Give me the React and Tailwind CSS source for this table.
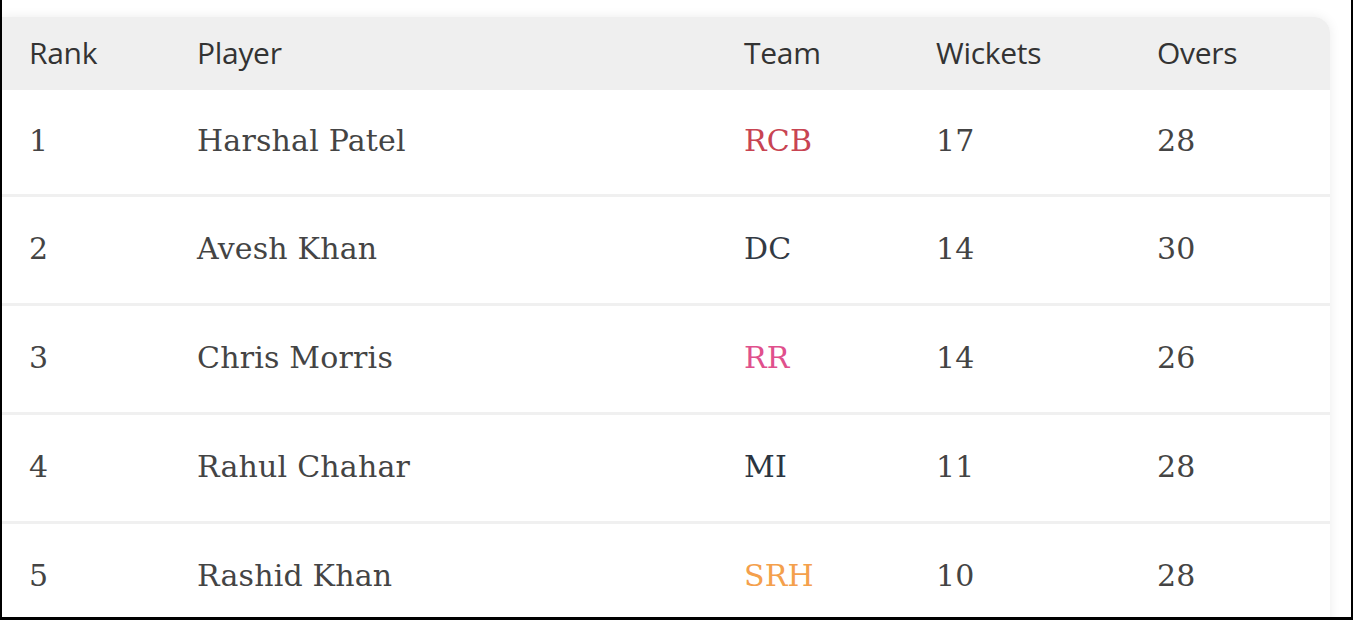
import React from "react";

const players = [
  { rank: 1, name: "Harshal Patel", team: "RCB", wickets: 17, overs: 28, color: "text-[#c84452]" },
  { rank: 2, name: "Avesh Khan", team: "DC", wickets: 14, overs: 30, color: "text-[#333a44]" },
  { rank: 3, name: "Chris Morris", team: "RR", wickets: 14, overs: 26, color: "text-[#e0508c]" },
  { rank: 4, name: "Rahul Chahar", team: "MI", wickets: 11, overs: 28, color: "text-[#2a3440]" },
  { rank: 5, name: "Rashid Khan", team: "SRH", wickets: 10, overs: 28, color: "text-[#f4a04c]" },
];

const cols = "grid grid-cols-[168px_547px_192px_221px_1fr] items-center pl-[27px]";

export default function App() {
  return (
    <div className="w-[1353px] h-[620px] overflow-hidden bg-white border-l-2 border-r-2 border-b-[3px] border-black">
      <div className="pt-[17px] pr-[21px]">
        <div className="rounded-tr-2xl bg-white shadow-[0_0_12px_rgba(0,0,0,0.08)]">
          {/* Header */}
          <div
            className={`${cols} h-[73px] bg-[#efefef] rounded-tr-2xl text-[30px] text-[#333] tracking-[-0.3px] pb-[3px]`}
            style={{ fontFamily: "'Open Sans', 'Liberation Sans', sans-serif" }}
          >
            <span>Rank</span>
            <span>Player</span>
            <span>Team</span>
            <span>Wickets</span>
            <span>Overs</span>
          </div>

          {/* Rows */}
          {players.map((p, i) => (
            <div
              key={p.rank}
              className={`${cols} text-[30px] text-[#444] pb-[4px] ${i === 0 ? "h-[104px]" : "h-[109px] border-t-[3px] border-[#f0f0f0]"}`}
              style={{ fontFamily: "'DejaVu Serif', 'Liberation Serif', serif", letterSpacing: "0.2px" }}
            >
              <span>{p.rank}</span>
              <span>{p.name}</span>
              <span className={p.color}>{p.team}</span>
              <span>{p.wickets}</span>
              <span>{p.overs}</span>
            </div>
          ))}
        </div>
      </div>
    </div>
  );
}
